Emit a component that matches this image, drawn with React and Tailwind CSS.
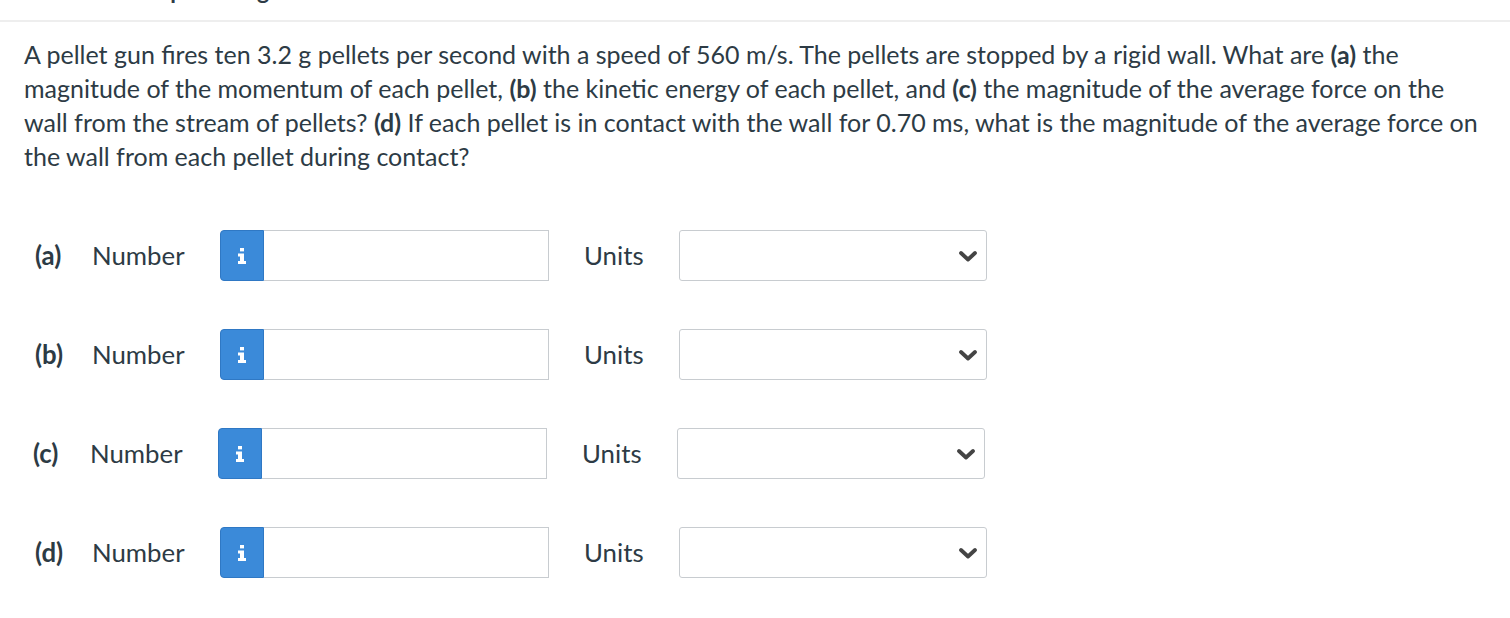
const rows = [
  { key: "a", shift: "ml-[35px]" },
  { key: "b", shift: "ml-[35px]" },
  { key: "c", shift: "ml-[33px]" },
  { key: "d", shift: "ml-[35px]" },
];

function InfoButton() {
  return (
    <button
      type="button"
      className="flex h-[51px] w-[44px] shrink-0 items-center justify-center rounded-l-[4px] border border-[#2f78c4] bg-[#3b8ad9]"
    >
      <svg width="10" height="16" viewBox="0 0 10 16" fill="#fff">
        <rect x="3" y="0" width="4" height="3.4" />
        <path d="M1 5.6h6v7.4h2V16H1v-3h2V8.6H1z" />
      </svg>
    </button>
  );
}

function AnswerRow({ row }) {
  return (
    <div className={`flex h-[51px] items-center ${row.shift}`}>
      <span className="w-[57px] font-bold">({row.key})</span>
      <span className="w-[128px]">Number</span>
      <InfoButton />
      <input
        type="text"
        className="h-[51px] w-[285px] border border-l-0 border-[#c8ccd0] bg-white outline-none"
      />
      <span className="ml-[35px] w-[95px]">Units</span>
      <div className="flex h-[51px] w-[308px] items-center justify-end rounded-[3px] border border-[#c8ccd0] bg-white pr-[8px]">
        <svg width="20" height="12" viewBox="0 0 20 12" fill="none" stroke="#444" strokeWidth="3.8" strokeLinecap="round" strokeLinejoin="round">
          <path d="M3 3l7 6.5 7-6.5" />
        </svg>
      </div>
    </div>
  );
}

export default function App() {
  return (
    <div
      className="h-[618px] w-[1510px] overflow-hidden bg-white text-[#2d3b45]"
      style={{ fontFamily: "Lato, 'Open Sans', sans-serif" }}
    >
      <div className="h-[22px] overflow-hidden border-b-2 border-[#eeeeee]">
        <div className="-mt-[23px] pl-[24px] text-[23px] font-bold leading-[27px]">
          Current Attempt in Progress
        </div>
      </div>

      <p className="mt-[15px] pl-[24px] pr-[21px] text-[25px] leading-[34px]">
        A pellet gun fires ten 3.2 g pellets per second with a speed of 560 m/s. The pellets are stopped by a rigid wall. What are{" "}
        <b>(a)</b> the magnitude of the momentum of each pellet, <b>(b)</b> the kinetic energy of each pellet, and{" "}
        <b>(c)</b> the magnitude of the average force on the wall from the stream of pellets? <b>(d)</b> If each pellet is in
        contact with the wall for 0.70 ms, what is the magnitude of the average force on the wall from each pellet during contact?
      </p>

      <div className="mt-[57px] flex flex-col gap-[48px] text-[25.8px]">
        {rows.map((row) => (
          <AnswerRow key={row.key} row={row} />
        ))}
      </div>
    </div>
  );
}
